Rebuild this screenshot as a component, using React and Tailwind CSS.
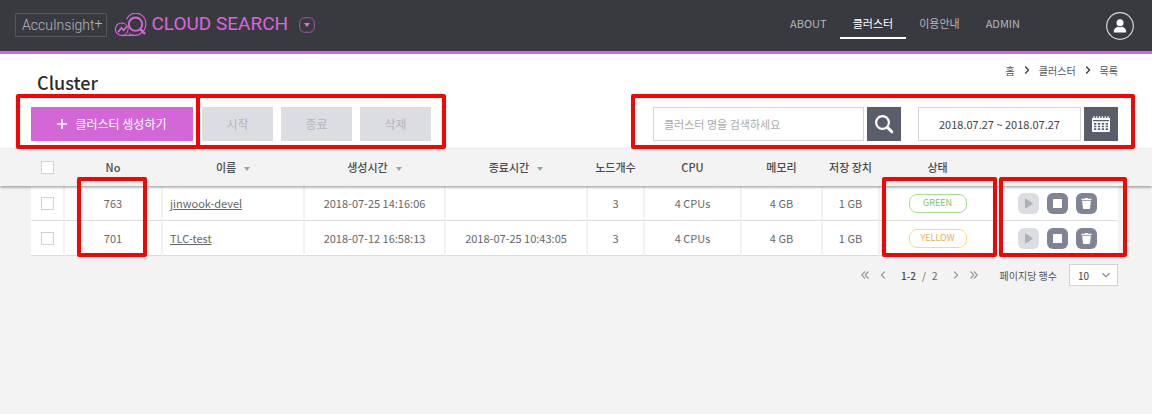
import React from "react";

const clusters = [
  { no: 763, name: "jinwook-devel", created: "2018-07-25 14:16:06", ended: "", nodes: 3, cpu: "4 CPUs", memory: "4 GB", storage: "1 GB", status: "GREEN" },
  { no: 701, name: "TLC-test", created: "2018-07-12 16:58:13", ended: "2018-07-25 10:43:05", nodes: 3, cpu: "4 CPUs", memory: "4 GB", storage: "1 GB", status: "YELLOW" },
];

const statusStyles = {
  GREEN: "border-[#a5dc8c] text-[#7cc65f]",
  YELLOW: "border-[#f3dc85] text-[#eaae54]",
};

const columnWidths = [
  "w-[31px]", "w-[34px]", "w-[98px]", "w-[142px]", "w-[141px]", "w-[142px]", "w-[57px]",
  "w-[97px]", "w-[81px]", "w-[57px]", "w-[117px]", "w-[121px]", "w-[34px]",
];

function Highlight({ className }) {
  return <span aria-hidden="true" className={`pointer-events-none absolute z-20 rounded-xs border-4 border-[#ff0000] ${className}`} />;
}

function CloudSearchLogo() {
  return (
    <svg viewBox="0 0 32 24" className="h-6 w-8" fill="none" stroke="#d766dc" aria-hidden="true">
      <path d="M11.6 6.2A10 10 0 0 1 30.8 10.5C30.8 15 29 18.500 25.500 20.800Q23.500 22.400 20 22.400H6.800A6.200 6.200 0 1 1 9.500 10.700" strokeWidth="1.100" />
      <path d="M9.500 10.700C12.200 11.400 13.400 14 13.200 16.500Q12.800 20.500 9 22.200M14 20.400Q16 22 19 22.300" strokeWidth="1" />
      <circle cx="20.500" cy="11.200" r="6.700" strokeWidth="1.900" />
      <path d="m25.200 16 4.800 5" strokeWidth="2.400" />
      <path d="m3 19.200 3.400-4.400 2.200 2.400 3.400-4" strokeWidth="1.700" />
    </svg>
  );
}

function Chevron({ double = false, left = false, className = "" }) {
  return (
    <svg viewBox="0 0 8 8" className={`h-2 w-2 ${className}`} fill="none" stroke="currentColor" strokeWidth="1.200" aria-hidden="true">
      {double ? (
        <path d={left ? "M4 .5.800 4 4 7.500M7.500.5 4.300 4l3.200 3.500" : "M.5.5 3.700 4 .5 7.500M4 .5 7.200 4 4 7.500"} />
      ) : (
        <path d={left ? "M5.800.5 2.400 4l3.400 3.500" : "M2.200.5 5.600 4 2.200 7.500"} />
      )}
    </svg>
  );
}

function Checkbox({ label }) {
  return (
    <input
      type="checkbox"
      aria-label={label}
      className="mx-auto block h-[13px] w-[13px] appearance-none border border-[#d2d2d2] bg-white checked:bg-[#d367d8]"
    />
  );
}

function NavItem({ children, active }) {
  return (
    <a
      href="#"
      aria-current={active ? "page" : undefined}
      className={`flex h-[26px] items-center border-b-2 px-[13px] pb-0.5 ${active ? "border-white text-white" : "border-transparent text-[#b5b6b9]"}`}
    >
      {children}
    </a>
  );
}

function HeaderCell({ children, sortable }) {
  return (
    <th scope="col" className="p-0 pr-0.5 font-medium whitespace-nowrap">
      {sortable ? (
        <button type="button" className="inline-flex items-center gap-2 font-medium">
          {children}
          <svg viewBox="0 0 6 4" className="mt-0.5 h-1 w-1.5" fill="#a0a0a0" aria-hidden="true">
            <path d="M0 0h6L3 4z" />
          </svg>
        </button>
      ) : (
        children
      )}
    </th>
  );
}

function Cell({ children, className = "border-r-2 border-r-[#f3f3f3] text-center" }) {
  return <td className={`relative border-b border-b-[#dcdcdc] bg-white p-0 whitespace-nowrap ${className}`}>{children}</td>;
}

function ToolButton({ children }) {
  return (
    <button type="button" disabled className="h-[34px] w-[71px] bg-[#dcdde2] text-xs text-[#b3b5bf]">
      {children}
    </button>
  );
}

function RowAction({ label, disabled, children }) {
  return (
    <button
      type="button"
      aria-label={label}
      disabled={disabled}
      className={`flex h-[21px] w-[21px] items-center justify-center rounded-md ${disabled ? "bg-[#dcdde2] text-[#acb0bd]" : "bg-[#7f8496] text-white"}`}
    >
      <svg viewBox="0 0 21 21" className="h-[21px] w-[21px]" fill="currentColor" aria-hidden="true">
        {children}
      </svg>
    </button>
  );
}

export default function App() {
  return (
    <div className="min-h-screen bg-[#f3f3f3] font-['Noto_Sans_CJK_KR',sans-serif] text-[#666]">
      <header className="flex h-[54px] items-center justify-between border-b-3 border-[#d766dc] bg-[#393a3f] pr-[18px] pl-[15px]">
        <div className="flex items-center pb-0.5 font-[Roboto,sans-serif]">
          <a href="#" className="flex h-6 items-center border border-[#55565b] pr-1 pl-1.5 text-sm font-light text-[#b5b6b9]">
            AccuInsight<span className="pb-1">+</span>
          </a>
          <a href="#" className="ml-2 flex items-center gap-1 text-[19px] whitespace-nowrap text-[#d766dc]">
            <CloudSearchLogo />
            CLOUD SEARCH
          </a>
          <button type="button" aria-label="서비스 선택" className="ml-[11px]">
            <svg viewBox="0 0 16 16" className="h-4 w-4" fill="none" aria-hidden="true">
              <rect x=".7" y=".7" width="14.600" height="14.600" rx="5" stroke="#a455a9" />
              <path d="M5 6h6L8 10z" fill="#e06ce5" />
            </svg>
          </button>
        </div>
        <div className="flex items-center">
          <nav className="flex text-[11px]">
            <NavItem>ABOUT</NavItem>
            <NavItem active>클러스터</NavItem>
            <NavItem>이용안내</NavItem>
            <NavItem>ADMIN</NavItem>
          </nav>
          <button type="button" aria-label="내 계정" className="ml-[73px]">
            <svg viewBox="0 0 28 28" className="h-7 w-7" aria-hidden="true">
              <circle cx="14" cy="14" r="13.300" fill="none" stroke="#d8d8da" strokeWidth="1.200" />
              <circle cx="14" cy="10.800" r="3.500" fill="#fff" />
              <path d="M7.800 20.400c0-3.600 2.200-5.200 4.200-5.600q2 1 4 0c2 .4 4.200 2 4.200 5.600z" fill="#fff" />
            </svg>
          </button>
        </div>
      </header>

      <main>
        <section className="bg-white pr-[34px] pb-2 pl-[31px]">
          <div className="flex h-[53px] justify-between">
            <h1 className="pt-[15px] pl-1.5 text-lg leading-[26px] font-medium text-[#2b2b2e]">Cluster</h1>
            <nav aria-label="breadcrumb" className="flex h-8 items-center gap-2 text-[10px] text-[#555]">
              <a href="#">홈</a>
              <Chevron className="text-[#333]" />
              <a href="#">클러스터</a>
              <Chevron className="text-[#333]" />
              <span>목록</span>
            </nav>
          </div>

          <div className="flex items-center justify-between">
            <div className="flex">
              <div className="relative">
                <button type="button" className="flex h-[34px] w-[162px] items-center justify-center gap-2 bg-[#d367d8] text-xs text-white">
                  <svg viewBox="0 0 10 10" className="h-2.5 w-2.5" stroke="#fff" strokeWidth="1.600" aria-hidden="true">
                    <path d="M5 0v10M0 5h10" />
                  </svg>
                  클러스터 생성하기
                </button>
                <Highlight className="-top-[13px] -right-[7px] -bottom-2 -left-[15px]" />
              </div>
              <div className="relative ml-[9px] flex gap-2">
                <ToolButton>시작</ToolButton>
                <ToolButton>종료</ToolButton>
                <ToolButton>삭제</ToolButton>
                <Highlight className="-top-[13px] -right-[15px] -bottom-2 -left-1.5" />
              </div>
            </div>

            <form className="relative flex gap-[3px]" onSubmit={(e) => e.preventDefault()}>
              <input
                type="text"
                aria-label="클러스터 명"
                placeholder="클러스터 명을 검색하세요"
                className="h-[34px] w-[211px] border border-[#d5d5d5] bg-white px-2.5 text-[11px] placeholder:text-[#aaa]"
              />
              <button type="submit" aria-label="검색" className="flex h-[34px] w-[34px] items-center justify-center bg-[#5a5e6b]">
                <svg viewBox="0 0 20 20" className="h-5 w-5" fill="none" stroke="#fff" aria-hidden="true">
                  <circle cx="8.500" cy="8.500" r="6.400" strokeWidth="2.200" />
                  <path d="m13.300 13.300 4.500 4.500" strokeWidth="3" strokeLinecap="round" />
                </svg>
              </button>
              <input
                type="text"
                aria-label="조회 기간"
                defaultValue="2018.07.27 ~ 2018.07.27"
                className="ml-3.5 h-[34px] w-[163px] border border-[#d5d5d5] bg-white text-center text-[11px] text-[#444]"
              />
              <button type="button" aria-label="달력 열기" className="flex h-[34px] w-[34px] items-center justify-center bg-[#5a5e6b]">
                <svg viewBox="0 0 18 16" className="h-4 w-[18px]" aria-hidden="true">
                  <path d="M0 2h18v13a1 1 0 0 1-1 1H1a1 1 0 0 1-1-1z" fill="#fff" />
                  <path d="M2 .3V3M4.800.3V3M7.600.3V3M10.400.3V3M13.200.3V3M16 .3V3" stroke="#fff" strokeWidth="1.300" />
                  <path d="M1 4.600h16" stroke="#5a5e6b" strokeWidth="1.300" />
                  <path d="M2 7.800h14M2 10.500h14M2 13.200h14" stroke="#5a5e6b" strokeWidth="1.700" strokeDasharray="2.300 1.600" />
                </svg>
              </button>
              <Highlight className="-top-[13px] -right-[17px] -bottom-2 -left-[22px]" />
            </form>
          </div>
        </section>

        <table className="w-full table-fixed border-separate border-spacing-0 text-[11px]">
          <colgroup>
            {columnWidths.map((width, i) => (
              <col key={i} className={width} />
            ))}
          </colgroup>
          <thead className="relative z-10 bg-[#f3f3f3] text-[#4a4a4a] shadow-[0_1px_3px_rgba(0,0,0,0.45)]">
            <tr className="h-[37px]">
              <td />
              <th scope="col" className="p-0 pr-0.5"><Checkbox label="전체 선택" /></th>
              <HeaderCell>No</HeaderCell>
              <HeaderCell sortable>이름</HeaderCell>
              <HeaderCell sortable>생성시간</HeaderCell>
              <HeaderCell sortable>종료시간</HeaderCell>
              <HeaderCell>노드개수</HeaderCell>
              <HeaderCell>CPU</HeaderCell>
              <HeaderCell>메모리</HeaderCell>
              <HeaderCell>저장 장치</HeaderCell>
              <HeaderCell>상태</HeaderCell>
              <td />
              <td />
            </tr>
          </thead>
          <tbody>
            {clusters.map((c, i) => (
              <tr key={c.no} className="h-[35px]">
                <td />
                <Cell><Checkbox label={`${c.name} 선택`} /></Cell>
                <Cell>
                  {c.no}
                  {i === 0 && <Highlight className="-top-[9px] left-3 h-20 w-[70px]" />}
                </Cell>
                <Cell className="border-r-2 border-r-[#f3f3f3]">
                  <a href="#" className="ml-[7px] underline">{c.name}</a>
                </Cell>
                <Cell>{c.created}</Cell>
                <Cell>{c.ended}</Cell>
                <Cell>{c.nodes}</Cell>
                <Cell>{c.cpu}</Cell>
                <Cell>{c.memory}</Cell>
                <Cell>{c.storage}</Cell>
                <Cell className="pr-0.5">
                  <span className={`mx-auto flex h-[19px] w-[58px] items-center justify-center rounded-lg border text-[9px] ${statusStyles[c.status]}`}>
                    {c.status}
                  </span>
                  {i === 0 && <Highlight className="-top-[9px] left-0.5 h-20 w-[115px]" />}
                </Cell>
                <Cell className="">
                  <div className="flex justify-center gap-2">
                    <RowAction label="시작" disabled>
                      <path d="M7.500 6v9l7-4.500z" stroke="currentColor" strokeLinejoin="round" />
                    </RowAction>
                    <RowAction label="종료">
                      <rect x="6" y="6" width="9" height="9" rx=".5" />
                    </RowAction>
                    <RowAction label="삭제">
                      <path d="M9 5h3v.8h3.500v1.400h-10V5.800H9zM6.200 7.900h8.600l-.7 7.100a1 1 0 0 1-1 .9H7.900a1 1 0 0 1-1-.9z" />
                    </RowAction>
                  </div>
                  {i === 0 && <Highlight className="-top-[9px] left-0.5 h-20 w-32" />}
                </Cell>
                <td />
              </tr>
            ))}
          </tbody>
        </table>

        <div className="flex items-center justify-end pt-2 pr-[34px] text-[10px]">
          <nav aria-label="페이지" className="flex items-center gap-2.5 text-[#999]">
            <button type="button" aria-label="첫 페이지"><Chevron double left /></button>
            <button type="button" aria-label="이전 페이지"><Chevron left /></button>
            <span className="flex gap-1.5 px-1 text-[#666]">
              <b className="font-medium text-[#4a4a4a]">1-2</b>
              <span>/</span>
              <span>2</span>
            </span>
            <button type="button" aria-label="다음 페이지"><Chevron /></button>
            <button type="button" aria-label="마지막 페이지"><Chevron double /></button>
          </nav>
          <label htmlFor="page-size" className="mr-3 ml-[22px] text-[#555]">페이지당 행수</label>
          <div className="relative">
            <select id="page-size" className="block h-[22px] w-[49px] appearance-none border border-[#d2d2d2] bg-white pl-2 text-[#444]">
              <option>10</option>
            </select>
            <Chevron className="pointer-events-none absolute top-[7px] right-2 rotate-90 text-[#888]" />
          </div>
        </div>
      </main>
    </div>
  );
}
